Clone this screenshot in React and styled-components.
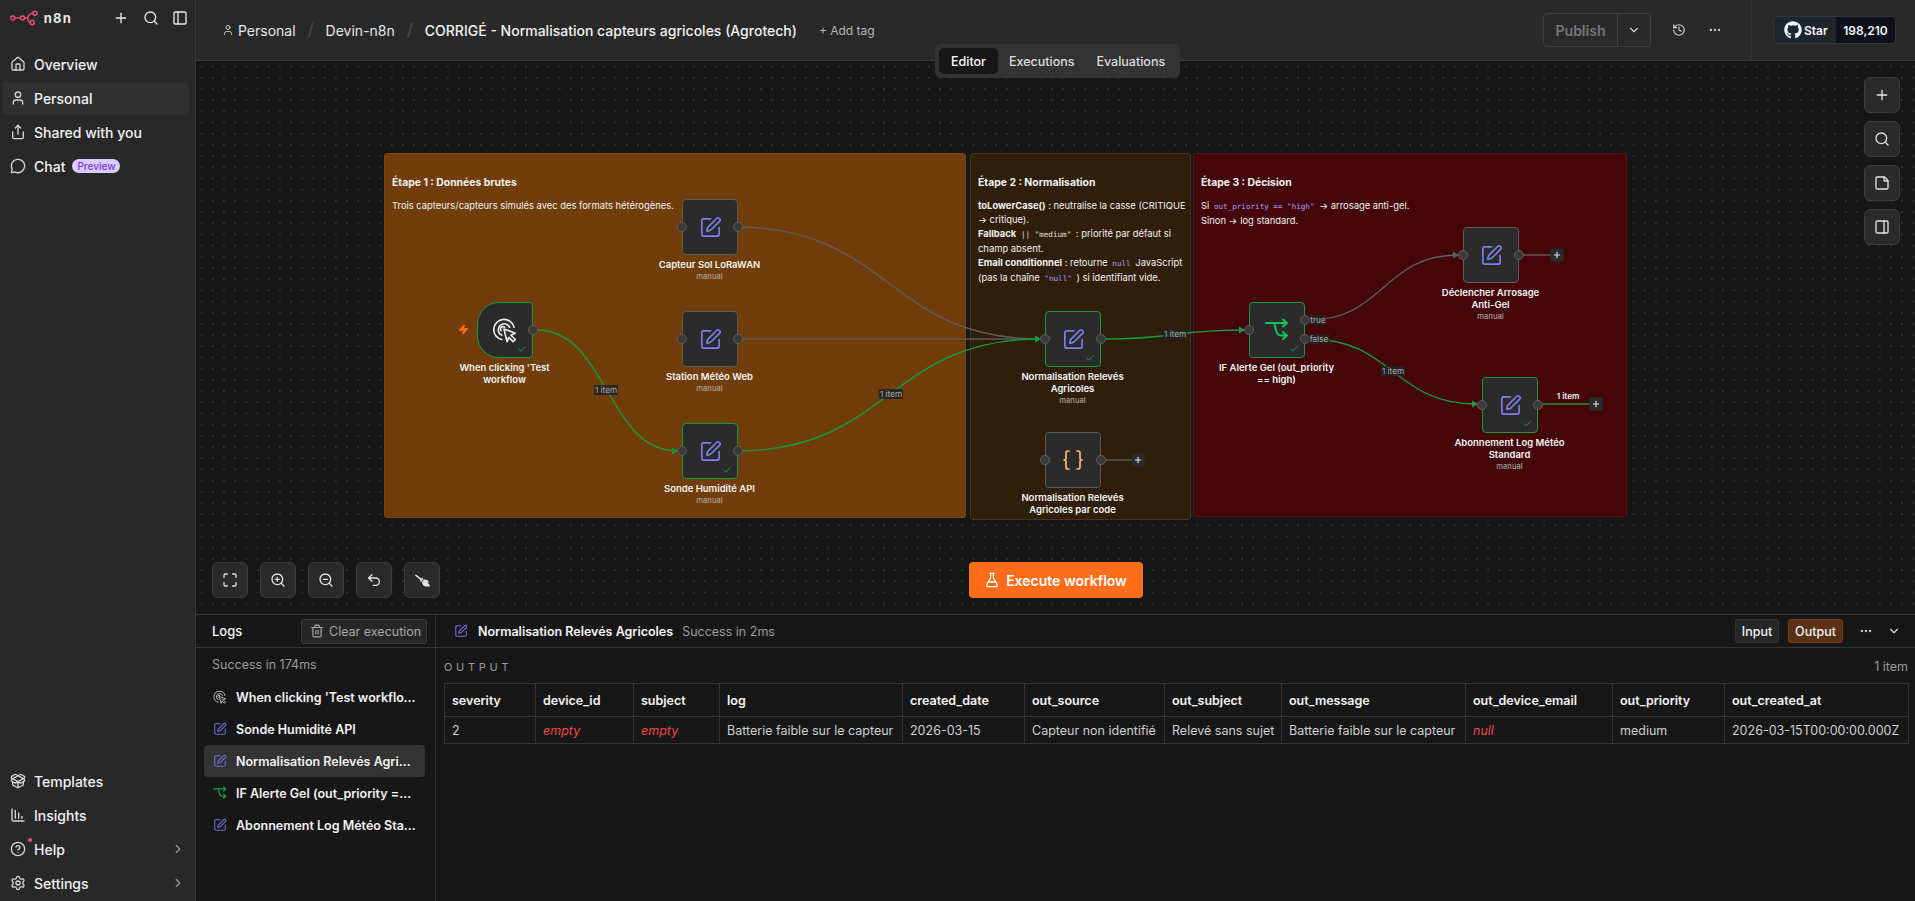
import React from 'react';
import styled, { createGlobalStyle } from 'styled-components';
import {
  Braces, ChartColumnDecreasing, Check, ChevronDown, ChevronRight, CircleHelp, Ellipsis, FlaskConical,
  History, House, Maximize, MessageCircle, PackageOpen, PanelLeft, PanelRight, Plus, Search, Settings,
  Share, SquarePen, StickyNote, Trash2, Undo2, User, Zap, ZoomIn, ZoomOut,
} from 'lucide-react';
import { FaBroom, FaGithub } from 'react-icons/fa';

const GREEN = '#17993b';
const GRAY = '#5c5c5c';

const GlobalStyle = createGlobalStyle`
  html, body { margin: 0; height: 100%; background: #171717; }
  body { font-family: Inter, "Noto Sans", sans-serif; color: #f5f5f5; overflow: hidden; }
  * { box-sizing: border-box; }
`;

const Shell = styled.div`
  display: grid;
  grid-template-columns: 196px 1fr;
  height: 100vh;
`;

/* sidebar */
const Sidebar = styled.aside`
  display: flex;
  flex-direction: column;
  background: #282828;
  border-right: 1px solid #383838;
  padding-bottom: 2px;
`;

const Brand = styled.div`
  display: flex;
  align-items: center;
  height: 36px;
  padding-left: 10px;
  margin-bottom: 12px;
  color: #e8e8e8;
`;

const BrandName = styled.span`
  margin-left: 6px;
  font-size: 13px;
  font-weight: 700;
  letter-spacing: 1.2px;
  margin-right: 34px;
`;

const BrandButton = styled.span`
  display: flex;
  width: 32px;
  justify-content: center;
`;

const NavList = styled.nav`
  display: flex;
  flex-direction: column;
  gap: 2px;
  padding: 0 6px 0 2px;
  flex: ${p => (p.$grow ? 1 : 'none')};
`;

const NavRow = styled.div`
  position: relative;
  display: flex;
  align-items: center;
  gap: 8px;
  height: 32px;
  padding-left: 8px;
  border-radius: 4px;
  font-size: 14px;
  font-weight: 450;
  color: #f2f2f2;
  background: ${p => (p.$active ? '#2f2f2f' : 'transparent')};
  svg { color: #d6d6d6; flex: none; }
`;

const NavEnd = styled.span`
  margin-left: auto;
  margin-right: 4px;
  display: flex;
  svg { color: #9a9a9a; }
`;

const PreviewBadge = styled.span`
  margin-left: -1px;
  padding: 0 5px;
  height: 14px;
  line-height: 14px;
  border-radius: 7px;
  font-size: 10px;
  background: #d9ccff;
  color: #7a35f0;
`;

const RedDot = styled.span`
  position: absolute;
  left: 26px;
  top: 5px;
  width: 4px;
  height: 4px;
  border-radius: 50%;
  background: #f2545b;
`;

/* main column */
const Main = styled.main`
  position: relative;
  display: grid;
  grid-template-rows: 61px 1fr 287px;
  min-width: 0;
`;

const TopBar = styled.header`
  display: flex;
  align-items: center;
  background: #292929;
  border-bottom: 1px solid #383838;
`;

const Crumbs = styled.div`
  display: flex;
  align-items: center;
  flex: 1;
  padding-left: 26px;
  font-size: 14px;
  color: #e6e6e6;
  svg { margin-right: 4px; color: #c8c8c8; }
`;

const Slash = styled.span`
  width: 30px;
  text-align: center;
  color: #4a4a4a;
  font-size: 17px;
`;

const Title = styled.span`
  font-weight: 500;
  color: #f2f2f2;
`;

const AddTag = styled.span`
  margin-left: 22px;
  font-size: 12px;
  color: #b5b5b5;
`;

const PublishGroup = styled.div`
  display: flex;
  align-items: center;
  height: 34px;
  border: 1px solid #3c3c3c;
  border-radius: 4px;
`;

const PublishLabel = styled.span`
  width: 73px;
  text-align: center;
  font-size: 14px;
  font-weight: 600;
  color: #787878;
`;

const PublishCaret = styled.span`
  display: flex;
  justify-content: center;
  align-items: center;
  width: 33px;
  height: 100%;
  border-left: 1px solid #3c3c3c;
  color: #cfcfcf;
`;

const TopIcon = styled.span`
  display: flex;
  justify-content: center;
  width: 36px;
  color: #d0d0d0;
  margin-left: ${p => p.$first ? '10px' : '0'};
`;

const StarSection = styled.div`
  display: flex;
  align-items: center;
  height: 60px;
  margin-left: 18px;
  padding: 0 19px 0 21px;
  border-left: 1px solid #333;
`;

const StarBox = styled.div`
  display: flex;
  height: 28px;
  width: 123px;
  border-radius: 4px;
  border: 1px solid #30363d;
  overflow: hidden;
  font-size: 12px;
  font-weight: 600;
`;

const StarLabel = styled.span`
  display: flex;
  align-items: center;
  gap: 2px;
  width: 62px;
  padding-left: 10px;
  background: #21262d;
  color: #f0f6fc;
`;

const StarCount = styled.span`
  flex: 1;
  display: flex;
  align-items: center;
  justify-content: center;
  background: #0d1117;
  color: #f0f6fc;
`;

const Tabs = styled.div`
  position: absolute;
  top: 44px;
  left: 739px;
  z-index: 5;
  display: flex;
  align-items: center;
  height: 34px;
  padding: 4px;
  border-radius: 6px;
  background: #333;
`;

const Tab = styled.span`
  display: flex;
  align-items: center;
  height: 26px;
  padding: 0 ${p => (p.$active ? '12px' : '11px')};
  margin-right: ${p => (p.$active ? '0' : '0')};
  border-radius: 5px;
  font-size: 12.5px;
  font-weight: 500;
  color: ${p => (p.$active ? '#fff' : '#dcdcdc')};
  background: ${p => (p.$active ? '#171717' : 'transparent')};
`;

/* canvas */
const Canvas = styled.section`
  position: relative;
  overflow: hidden;
  background-color: #171717;
  background-image: radial-gradient(#303030 0.7px, transparent 0.8px);
  background-size: 11.2px 11.2px;
`;

const Stage = styled.div`
  position: absolute;
  left: 0;
  top: 0;
  width: 1915px;
  height: 901px;
  transform: translate(-196px, -61px);
`;

const Note = styled.div`
  position: absolute;
  left: ${p => p.$x}px;
  top: ${p => p.$y}px;
  width: ${p => p.$w}px;
  height: ${p => p.$h}px;
  padding: 22px 7px 0;
  border-radius: 3px;
  border: 1px solid ${p => p.$edge};
  background: ${p => p.$bg};
  font-size: 9.4px;
  line-height: 14px;
  color: #f2f2f2;
`;

const NoteTitle = styled.div`
  font-size: 10.4px;
  font-weight: 700;
  line-height: 14px;
  margin-bottom: 9px;
`;

const NoteLine = styled.div`
  white-space: nowrap;
`;

const Mono = styled.code`
  font-family: "DejaVu Sans Mono", "Liberation Mono", monospace;
  font-size: 7.6px;
  padding: 0 2px;
  color: ${p => p.$color || '#a8a0ff'};
`;

const Edges = styled.svg`
  position: absolute;
  left: 0;
  top: 0;
  pointer-events: none;
  z-index: 2;
`;

const NodeBox = styled.div`
  position: absolute;
  z-index: 3;
  left: ${p => p.$x}px;
  top: ${p => p.$y}px;
  width: 56px;
  height: 56px;
  display: flex;
  align-items: center;
  justify-content: center;
  background: #2b2b2b;
  border: 1.5px solid ${p => (p.$ran ? '#179a3a' : '#5f5a52')};
  border-radius: ${p => (p.$trigger ? '22px 4px 4px 22px' : '4px')};
`;

const Handle = styled.span`
  position: absolute;
  top: ${p => p.$top}px;
  ${p => p.$side}: -6px;
  width: 10px;
  height: 10px;
  margin-top: -5px;
  border-radius: 50%;
  background: #3a3a3a;
  border: 1px solid #5e5e5e;
`;

const RanCheck = styled.span`
  position: absolute;
  right: 5px;
  bottom: 3px;
  display: flex;
  color: #1ba845;
`;

const NodeCaption = styled.div`
  position: absolute;
  top: 59px;
  left: -50px;
  width: 153px;
  text-align: center;
  font-size: 9.5px;
  line-height: 12px;
  font-weight: 600;
  color: #f4f4f4;
`;

const NodeSub = styled.div`
  font-size: 7.6px;
  font-weight: 500;
  color: #a5a09a;
`;

const Bolt = styled.span`
  position: absolute;
  z-index: 3;
  left: 458px;
  top: 324px;
  display: flex;
  color: #ff6d1a;
`;

const EdgeTag = styled.span`
  position: absolute;
  z-index: 4;
  left: ${p => p.$x}px;
  top: ${p => p.$y}px;
  transform: translate(-50%, -50%);
  padding: 0 1px;
  font-size: 8.2px;
  line-height: 10px;
  color: ${p => (p.$bright ? '#f0f0f0' : '#a9a9a9')};
  background: ${p => (p.$bright ? 'transparent' : 'rgba(36, 36, 36, 0.88)')};
  font-weight: ${p => (p.$bright ? 600 : 400)};
`;

const AddStub = styled.span`
  position: absolute;
  z-index: 4;
  left: ${p => p.$x}px;
  top: ${p => p.$y}px;
  transform: translate(-50%, -50%);
  width: 13px;
  height: 13px;
  display: flex;
  align-items: center;
  justify-content: center;
  border-radius: 2px;
  background: #2b2b2b;
  color: #e6e6e6;
`;

const ToolColumn = styled.div`
  position: absolute;
  z-index: 5;
  right: 15px;
  top: 16px;
  display: flex;
  flex-direction: column;
  gap: 8px;
`;

const ZoomBar = styled.div`
  position: absolute;
  z-index: 5;
  left: 16px;
  bottom: 16px;
  display: flex;
  gap: 12px;
`;

const ToolButton = styled.span`
  display: flex;
  align-items: center;
  justify-content: center;
  width: 36px;
  height: 36px;
  border-radius: 6px;
  background: #2a2a2a;
  border: 1px solid #3b3b3b;
  color: #e4e4e4;
`;

const ExecuteButton = styled.div`
  position: absolute;
  z-index: 5;
  bottom: 16px;
  left: 50%;
  transform: translateX(-50%);
  display: flex;
  align-items: center;
  justify-content: center;
  gap: 6px;
  width: 174px;
  height: 36px;
  border-radius: 4px;
  background: #ff6d1a;
  color: #fff;
  font-size: 14px;
  font-weight: 600;
`;

/* logs panel */
const LogsPanel = styled.section`
  display: grid;
  grid-template-columns: 240px 1fr;
  border-top: 1px solid #333;
  background: #171717;
  min-height: 0;
`;

const LogsSide = styled.div`
  border-right: 1px solid #333;
  min-width: 0;
`;

const PaneHeader = styled.div`
  display: flex;
  align-items: center;
  height: 33px;
  border-bottom: 1px solid #333;
`;

const LogsTitle = styled.span`
  margin-left: 16px;
  flex: 1;
  font-size: 13px;
  font-weight: 500;
`;

const ClearButton = styled.span`
  display: flex;
  align-items: center;
  gap: 5px;
  height: 25px;
  width: 126px;
  margin-right: 8px;
  padding-left: 8px;
  border-radius: 3px;
  border: 1px solid #3a3a3a;
  background: #272727;
  color: #a8a8a8;
  font-size: 12.5px;
  white-space: nowrap;
`;

const RunSummary = styled.div`
  height: 33px;
  padding: 9px 0 0 16px;
  font-size: 12.5px;
  color: #9a9a9a;
`;

const LogRow = styled.div`
  display: flex;
  align-items: center;
  gap: 9px;
  height: 32px;
  margin: 0 10px 0 8px;
  padding: 0 8px 0 9px;
  border-radius: 4px;
  background: ${p => (p.$active ? '#333' : 'transparent')};
  font-size: 12.5px;
  font-weight: 600;
  color: #f2f2f2;
  svg { flex: none; }
`;

const LogName = styled.span`
  overflow: hidden;
  white-space: nowrap;
  text-overflow: ellipsis;
`;

const Detail = styled.div`
  min-width: 0;
`;

const DetailName = styled.span`
  margin-left: 10px;
  font-size: 12.5px;
  font-weight: 600;
`;

const DetailStatus = styled.span`
  margin-left: 9px;
  flex: 1;
  font-size: 12.5px;
  color: #9a9a9a;
`;

const DetailIcon = styled.span`
  display: flex;
  margin-left: 18px;
`;

const ViewButton = styled.span`
  display: flex;
  align-items: center;
  justify-content: center;
  height: 24px;
  width: ${p => p.$w}px;
  margin-right: 9px;
  border-radius: 3px;
  font-size: 12.5px;
  font-weight: 500;
  border: 1px solid ${p => (p.$on ? '#6d4020' : '#333')};
  background: ${p => (p.$on ? '#5a3114' : '#262626')};
  color: #f4f4f4;
`;

const HeaderIcon = styled.span`
  display: flex;
  justify-content: center;
  width: 28px;
  color: #d6d6d6;
  margin-right: ${p => p.$end ? '7px' : '0'};
`;

const OutputBar = styled.div`
  display: flex;
  justify-content: space-between;
  align-items: center;
  height: 35px;
  padding: 2px 7px 0 8px;
  font-size: 12.5px;
  color: #9a9a9a;
`;

const OutputLabel = styled.span`
  font-size: 11px;
  letter-spacing: 3.7px;
  color: #9a9a9a;
`;

const DataTable = styled.table`
  margin-left: 8px;
  border-collapse: collapse;
  table-layout: fixed;
  width: 1464px;
  font-size: 12.5px;
  th, td {
    border: 1px solid #333;
    padding: 0 7px;
    text-align: left;
    white-space: nowrap;
    overflow: hidden;
  }
  th { height: 33px; font-weight: 600; color: #f4f4f4; }
  td { height: 27px; color: #d0d0d0; }
`;

const Empty = styled.span`
  font-style: italic;
  color: #f0484e;
`;

/* drawings */
const Logo = () => (
  <svg width="30" height="16" viewBox="0 0 30 16" fill="none" stroke="#ea4b71" strokeWidth="1.6">
    <circle cx="3" cy="8" r="2.2" />
    <circle cx="13.5" cy="8" r="2.2" />
    <circle cx="27" cy="3" r="2.2" />
    <circle cx="24" cy="13" r="2.2" />
    <path d="M5.2 8h6M15.7 8h2.3c2.5 0 1.8-5 4.5-5h2.3M18 8c2.5 0 1.2 5 3.8 5" />
  </svg>
);

const ClickIcon = ({ size = 24, color = '#f0f0f0' }) => (
  <svg width={size} height={size} viewBox="0 0 24 24" fill="none" stroke={color} strokeWidth="1.5">
    <path d="M9.5 21A9.5 9.5 0 1 1 20.5 10" />
    <path d="M9.5 17A5.5 5.5 0 1 1 16.5 10" />
    <path d="M9 13a2.2 2.2 0 1 1 3-3" />
    <path d="M11 11l10.5 4-4 1.8 4 4-2 2-4-4-1.6 4z" fill="#2b2b2b" strokeLinejoin="round" />
  </svg>
);

const BranchIcon = ({ size = 24, color = '#10c25a' }) => (
  <svg width={size} height={size} viewBox="0 0 24 24" fill="none" stroke={color} strokeWidth="2" strokeLinecap="round" strokeLinejoin="round">
    <path d="M1 5h21M18 1.5L22 5l-4 3.5" />
    <path d="M8 5c2 0 2 4 3 7 1 4 2 5.5 5 5.5h6M18 14l4 3.5-4 3.5" />
  </svg>
);

const Arrow = ({ x, y, color }) => (
  <polygon points={`${x - 6},${y - 3.5} ${x},${y} ${x - 6},${y + 3.5}`} fill={color} />
);

const curve = (x1, y1, x2, y2) => {
  const mid = (x1 + x2) / 2;
  return `M${x1} ${y1}C${mid} ${y1} ${mid} ${y2} ${x2} ${y2}`;
};

const wires = [
  { from: [737, 227], to: [1040, 339], color: GRAY },
  { from: [737, 339], to: [1040, 339], color: GRAY },
  { from: [537, 330], to: [677, 451], color: GREEN, arrow: true },
  { from: [737, 451], to: [1040, 339], color: GREEN, arrow: true },
  { from: [1105, 339], to: [1244, 330], color: GREEN, arrow: true },
  { from: [1309, 320], to: [1458, 255], color: GRAY, arrow: true },
  { from: [1309, 339], to: [1477, 404], color: GREEN, arrow: true },
  { from: [1524, 255], to: [1552, 255], color: GRAY },
  { from: [1543, 404], to: [1591, 404], color: GREEN },
  { from: [1105, 460], to: [1133, 460], color: GRAY },
];

const tags = [
  { x: 606, y: 390, text: '1 item' },
  { x: 891, y: 394, text: '1 item' },
  { x: 1175, y: 334, text: '1 item' },
  { x: 1318, y: 320, text: 'true' },
  { x: 1319, y: 339, text: 'false' },
  { x: 1393, y: 371, text: '1 item' },
  { x: 1568, y: 396, text: '1 item', bright: true },
];

const pen = <SquarePen size={23} color="#7f80f0" strokeWidth={1.7} />;

const nodes = [
  { x: 477, y: 302, trigger: true, ran: true, icon: <ClickIcon size={26} />, lines: ["When clicking 'Test", 'workflow'] },
  { x: 682, y: 199, icon: pen, lines: ['Capteur Sol LoRaWAN'], sub: 'manual' },
  { x: 682, y: 311, icon: pen, lines: ['Station Météo Web'], sub: 'manual' },
  { x: 682, y: 423, ran: true, icon: pen, lines: ['Sonde Humidité API'], sub: 'manual' },
  { x: 1045, y: 311, ran: true, icon: pen, lines: ['Normalisation Relevés', 'Agricoles'], sub: 'manual' },
  { x: 1045, y: 432, icon: <Braces size={24} color="#ffb866" strokeWidth={1.7} />, lines: ['Normalisation Relevés', 'Agricoles par code'] },
  { x: 1249, y: 302, ran: true, branch: true, icon: <BranchIcon />, lines: ['IF Alerte Gel (out_priority', '== high)'] },
  { x: 1463, y: 227, icon: pen, lines: ['Déclencher Arrosage', 'Anti-Gel'], sub: 'manual' },
  { x: 1482, y: 377, ran: true, icon: pen, lines: ['Abonnement Log Météo', 'Standard'], sub: 'manual' },
];

const logIcon = <SquarePen size={14} color="#7173d8" strokeWidth={1.8} />;

const logRows = [
  { icon: <ClickIcon size={14} color="#c8c8c8" />, name: "When clicking 'Test workflow'" },
  { icon: logIcon, name: 'Sonde Humidité API' },
  { icon: logIcon, name: 'Normalisation Relevés Agricoles', active: true },
  { icon: <BranchIcon size={14} color="#17a349" />, name: 'IF Alerte Gel (out_priority == high)' },
  { icon: logIcon, name: 'Abonnement Log Météo Standard' },
];

const columns = [
  ['severity', 91, '2'],
  ['device_id', 98, null],
  ['subject', 86, null],
  ['log', 183, 'Batterie faible sur le capteur'],
  ['created_date', 122, '2026-03-15'],
  ['out_source', 140, 'Capteur non identifié'],
  ['out_subject', 117, 'Relevé sans sujet'],
  ['out_message', 184, 'Batterie faible sur le capteur'],
  ['out_device_email', 147, 'null!'],
  ['out_priority', 112, 'medium'],
  ['out_created_at', 184, '2026-03-15T00:00:00.000Z'],
];

const FlowNode = ({ x, y, trigger, ran, branch, icon, lines, sub }) => (
  <NodeBox $x={x} $y={y} $trigger={trigger} $ran={ran}>
    {icon}
    {!trigger && <Handle $side="left" $top={27} />}
    {branch ? (
      <>
        <Handle $side="right" $top={17} />
        <Handle $side="right" $top={36} />
      </>
    ) : (
      <Handle $side="right" $top={27} />
    )}
    {ran && <RanCheck><Check size={10} strokeWidth={2} /></RanCheck>}
    <NodeCaption>
      {lines.map(line => <div key={line}>{line}</div>)}
      {sub && <NodeSub>{sub}</NodeSub>}
    </NodeCaption>
  </NodeBox>
);

const App = () => {
  return (
    <Shell>
      <GlobalStyle />
      <Sidebar>
        <Brand>
          <Logo />
          <BrandName>n8n</BrandName>
          <BrandButton><Plus size={16} /></BrandButton>
          <BrandButton><Search size={16} /></BrandButton>
          <BrandButton><PanelLeft size={16} /></BrandButton>
        </Brand>
        <NavList $grow>
          <NavRow><House size={16} />Overview</NavRow>
          <NavRow $active><User size={16} />Personal</NavRow>
          <NavRow><Share size={16} />Shared with you</NavRow>
          <NavRow><MessageCircle size={16} />Chat<PreviewBadge>Preview</PreviewBadge></NavRow>
        </NavList>
        <NavList>
          <NavRow><PackageOpen size={16} />Templates</NavRow>
          <NavRow><ChartColumnDecreasing size={16} />Insights</NavRow>
          <NavRow>
            <CircleHelp size={16} />Help<RedDot />
            <NavEnd><ChevronRight size={14} /></NavEnd>
          </NavRow>
          <NavRow>
            <Settings size={16} />Settings
            <NavEnd><ChevronRight size={14} /></NavEnd>
          </NavRow>
        </NavList>
      </Sidebar>

      <Main>
        <TopBar>
          <Crumbs>
            <User size={12} />Personal
            <Slash>/</Slash>Devin-n8n
            <Slash>/</Slash><Title>CORRIGÉ - Normalisation capteurs agricoles (Agrotech)</Title>
            <AddTag>+ Add tag</AddTag>
          </Crumbs>
          <PublishGroup>
            <PublishLabel>Publish</PublishLabel>
            <PublishCaret><ChevronDown size={14} /></PublishCaret>
          </PublishGroup>
          <TopIcon $first><History size={14} /></TopIcon>
          <TopIcon><Ellipsis size={14} /></TopIcon>
          <StarSection>
            <StarBox>
              <StarLabel><FaGithub size={18} />Star</StarLabel>
              <StarCount>198,210</StarCount>
            </StarBox>
          </StarSection>
        </TopBar>

        <Tabs>
          <Tab $active>Editor</Tab>
          <Tab>Executions</Tab>
          <Tab>Evaluations</Tab>
        </Tabs>

        <Canvas>
          <Stage>
            <Note $x={384} $y={153} $w={582} $h={365} $bg="#713d0a" $edge="#7c4612">
              <NoteTitle>Étape 1 : Données brutes</NoteTitle>
              <NoteLine>Trois capteurs/capteurs simulés avec des formats hétérogènes.</NoteLine>
            </Note>
            <Note $x={970} $y={153} $w={221} $h={367} $bg="#2f1e0a" $edge="#4a3418">
              <NoteTitle>Étape 2 : Normalisation</NoteTitle>
              <NoteLine><b>toLowerCase()</b> : neutralise la casse (CRITIQUE</NoteLine>
              <NoteLine>→ critique).</NoteLine>
              <NoteLine><b>Fallback</b> <Mono $color="#e6e0d0">|| "medium"</Mono> : priorité par défaut si</NoteLine>
              <NoteLine>champ absent.</NoteLine>
              <NoteLine><b>Email conditionnel</b> : retourne <Mono>null</Mono> JavaScript</NoteLine>
              <NoteLine>(pas la chaîne <Mono>"null"</Mono> ) si identifiant vide.</NoteLine>
            </Note>
            <Note $x={1193} $y={153} $w={434} $h={364} $bg="#440608" $edge="#5c1215">
              <NoteTitle>Étape 3 : Décision</NoteTitle>
              <NoteLine>Si <Mono>out_priority == "high"</Mono> → arrosage anti-gel.</NoteLine>
              <NoteLine>Sinon → log standard.</NoteLine>
            </Note>

            <Edges width="1915" height="901" viewBox="0 0 1915 901" fill="none">
              {wires.map(({ from, to, color, arrow }) => (
                <g key={from.concat(to).join()}>
                  <path d={curve(from[0], from[1], to[0], to[1])} stroke={color} strokeWidth="1.4" />
                  {arrow && <Arrow x={to[0] + 1} y={to[1]} color={color} />}
                </g>
              ))}
              <Arrow x={1041} y={339} color={GREEN} />
            </Edges>

            <Bolt><Zap size={11} fill="currentColor" /></Bolt>
            {nodes.map(node => <FlowNode key={node.lines[0]} {...node} />)}
            {tags.map(tag => <EdgeTag key={`${tag.x}-${tag.y}`} $x={tag.x} $y={tag.y} $bright={tag.bright}>{tag.text}</EdgeTag>)}
            <AddStub $x={1557} $y={255}><Plus size={9} strokeWidth={3} /></AddStub>
            <AddStub $x={1596} $y={404}><Plus size={9} strokeWidth={3} /></AddStub>
            <AddStub $x={1138} $y={460}><Plus size={9} strokeWidth={3} /></AddStub>
          </Stage>

          <ToolColumn>
            <ToolButton><Plus size={16} /></ToolButton>
            <ToolButton><Search size={16} /></ToolButton>
            <ToolButton><StickyNote size={16} /></ToolButton>
            <ToolButton><PanelRight size={16} /></ToolButton>
          </ToolColumn>

          <ZoomBar>
            <ToolButton><Maximize size={16} /></ToolButton>
            <ToolButton><ZoomIn size={16} /></ToolButton>
            <ToolButton><ZoomOut size={16} /></ToolButton>
            <ToolButton><Undo2 size={16} /></ToolButton>
            <ToolButton><FaBroom size={15} style={{ transform: 'scaleX(-1)' }} /></ToolButton>
          </ZoomBar>

          <ExecuteButton><FlaskConical size={16} />Execute workflow</ExecuteButton>
        </Canvas>

        <LogsPanel>
          <LogsSide>
            <PaneHeader>
              <LogsTitle>Logs</LogsTitle>
              <ClearButton><Trash2 size={14} />Clear execution</ClearButton>
            </PaneHeader>
            <RunSummary>Success in 174ms</RunSummary>
            {logRows.map(row => (
              <LogRow key={row.name} $active={row.active}>
                {row.icon}
                <LogName>{row.name}</LogName>
              </LogRow>
            ))}
          </LogsSide>

          <Detail>
            <PaneHeader>
              <DetailIcon>{logIcon}</DetailIcon>
              <DetailName>Normalisation Relevés Agricoles</DetailName>
              <DetailStatus>Success in 2ms</DetailStatus>
              <ViewButton $w={44}>Input</ViewButton>
              <ViewButton $w={55} $on>Output</ViewButton>
              <HeaderIcon><Ellipsis size={14} /></HeaderIcon>
              <HeaderIcon $end><ChevronDown size={14} /></HeaderIcon>
            </PaneHeader>
            <OutputBar>
              <OutputLabel>OUTPUT</OutputLabel>
              <span>1 item</span>
            </OutputBar>
            <DataTable>
              <colgroup>
                {columns.map(([name, width]) => <col key={name} width={width} />)}
              </colgroup>
              <thead>
                <tr>{columns.map(([name]) => <th key={name}>{name}</th>)}</tr>
              </thead>
              <tbody>
                <tr>
                  {columns.map(([name, , value]) => (
                    <td key={name}>
                      {value === null && <Empty>empty</Empty>}
                      {value === 'null!' && <Empty>null</Empty>}
                      {value !== null && value !== 'null!' && value}
                    </td>
                  ))}
                </tr>
              </tbody>
            </DataTable>
          </Detail>
        </LogsPanel>
      </Main>
    </Shell>
  );
};

export default App;
